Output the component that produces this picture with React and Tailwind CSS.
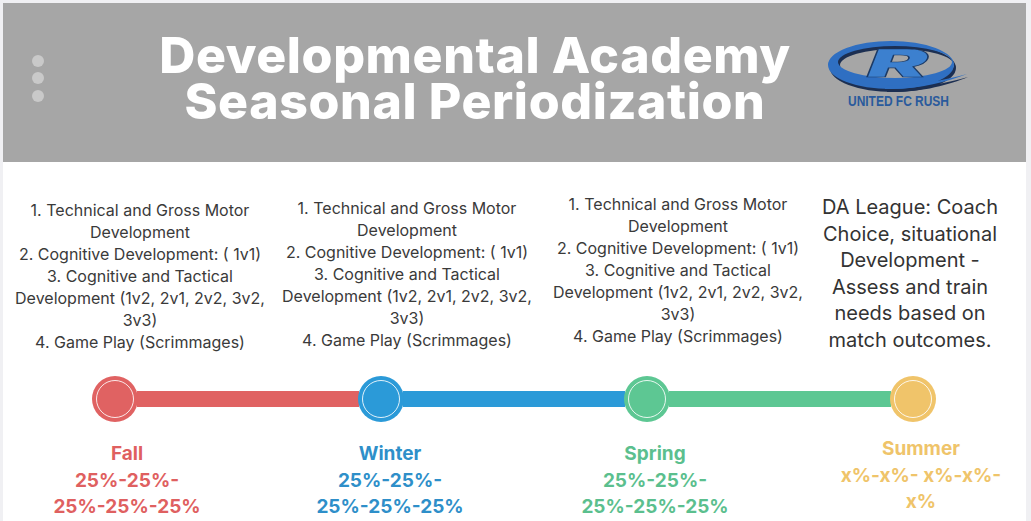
import React from 'react'

const seasons = [
  { name: 'Fall', color: '#e06262', text: '#df6060', lines: ['25%-25%-', '25%-25%-25%'] },
  { name: 'Winter', color: '#2b9ad8', text: '#2e8fc9', lines: ['25%-25%-', '25%-25%-25%'] },
  { name: 'Spring', color: '#5dc793', text: '#5bbf8e', lines: ['25%-25%-', '25%-25%-25%'] },
  { name: 'Summer', color: '#f0c46a', text: '#efc46a', lines: ['x%-x%- x%-x%-', 'x%'] },
]

const plan = [
  '1. Technical and Gross Motor',
  'Development',
  '2. Cognitive Development: ( 1v1)',
  '3. Cognitive and Tactical',
  'Development (1v2, 2v1, 2v2, 3v2,',
  '3v3)',
  '4. Game Play (Scrimmages)',
]

const ring = 'M1 26 A63 24 0 1 0 127 26 A63 24 0 1 0 1 26 Z M11 23 A57 16 0 1 0 125 23 A57 16 0 1 0 11 23 Z'

// club mark: swoosh ring + R + name
const Logo = () => (
  <svg width="142" height="72" viewBox="0 0 142 72">
    <path fillRule="evenodd" fill="#1c2f52" d={ring} transform="translate(2 3)" />
    <path d="M60 53 C92 54 122 46 141 38 C120 44 94 49 60 50 Z" fill="#1c2f52" />
    <path fillRule="evenodd" fill="#2f6fc2" d={ring} />
    <path d="M58 50 C90 51 120 43 140 35 C118 41 92 46 58 47 Z" fill="#2f6fc2" />
    <text
      x="0"
      y="0"
      fontFamily="Inter, sans-serif"
      fontWeight="900"
      fontStyle="italic"
      fontSize="38"
      fill="#3c80cf"
      stroke="#1b3a66"
      strokeWidth="0.7"
      transform="translate(40 38) scale(2.4 1)"
    >
      R
    </text>
    <text
      x="21"
      y="67"
      textLength="101"
      lengthAdjust="spacingAndGlyphs"
      fontFamily='"Liberation Sans", Arial, sans-serif'
      fontWeight="700"
      fontSize="14"
      fill="#2a5a9c"
    >
      UNITED FC RUSH
    </text>
  </svg>
)

export default function App() {
  return (
    <div className="w-[1031px] h-[521px] bg-[#f0f0f3] pt-[3px] pl-[3px] pr-[5px] pb-[4px] flex flex-col overflow-hidden" style={{ fontFamily: 'Inter, "Open Sans", sans-serif' }}>
      {/* header */}
      <div className="h-[159px] shrink-0 bg-[#a6a6a6] flex items-center pb-[9px]">
        <div className="ml-[29px] flex flex-col gap-[5.5px]">
          <span className="w-[12px] h-[12px] rounded-full bg-[#c9c9c9]" />
          <span className="w-[12px] h-[12px] rounded-full bg-[#c9c9c9]" />
          <span className="w-[12px] h-[12px] rounded-full bg-[#c9c9c9]" />
        </div>
        <h1 className="ml-[81px] w-[700px] text-center text-white font-extrabold text-[50px] leading-[46px] tracking-[0.6px]">
          Developmental Academy
          <br />
          Seasonal Periodization
        </h1>
        <div className="ml-[2px] -mt-[6px]">
          <Logo />
        </div>
      </div>

      {/* body */}
      <div className="flex-1 bg-white border-b border-[#dcdcdc] flex flex-col">
        <div className="flex pl-[7px] text-[#3a3a3a] text-[16px] leading-[22px] text-center">
          <div className="w-[260px] mt-[37px]">
            {plan.map((l, i) => <div key={i}>{l}</div>)}
          </div>
          <div className="w-[260px] ml-[7px] mt-[35px]">
            {plan.map((l, i) => <div key={i}>{l}</div>)}
          </div>
          <div className="w-[260px] ml-[11px] mt-[31px]">
            {plan.map((l, i) => <div key={i}>{l}</div>)}
          </div>
          <div className="w-[190px] ml-[7px] mt-[32px] text-[20px] leading-[26.5px] text-[#333]">
            <div>DA League: Coach</div>
            <div>Choice, situational</div>
            <div>Development -</div>
            <div>Assess and train</div>
            <div>needs based on</div>
            <div>match outcomes.</div>
          </div>
        </div>

        {/* timeline */}
        <div className="flex items-center ml-[89px] mt-[23px]">
          {seasons.map((s, i) => (
            <React.Fragment key={s.name}>
              <div className="relative z-10 w-[46px] h-[46px] rounded-full flex items-center justify-center shrink-0" style={{ backgroundColor: s.color }}>
                <div className="w-[38px] h-[38px] rounded-full border-[1.5px] border-white/85" />
              </div>
              {i < 3 && <div className="w-[222px] h-[16px] -mx-[1px] shrink-0" style={{ backgroundColor: s.color }} />}
            </React.Fragment>
          ))}
        </div>

        {/* labels */}
        <div className="flex ml-[39px] mt-[19px] font-bold text-[19px] leading-[26.5px] text-center">
          {seasons.map((s, i) => (
            <div key={s.name} className={`w-[170px] ${i === 0 ? '' : i === 1 ? 'ml-[93px]' : i === 2 ? 'ml-[95px]' : 'ml-[96px] -mt-[5px]'}`} style={{ color: s.text }}>
              <div>{s.name}</div>
              {s.lines.map((l) => <div key={l}>{l}</div>)}
            </div>
          ))}
        </div>
      </div>
    </div>
  )
}
